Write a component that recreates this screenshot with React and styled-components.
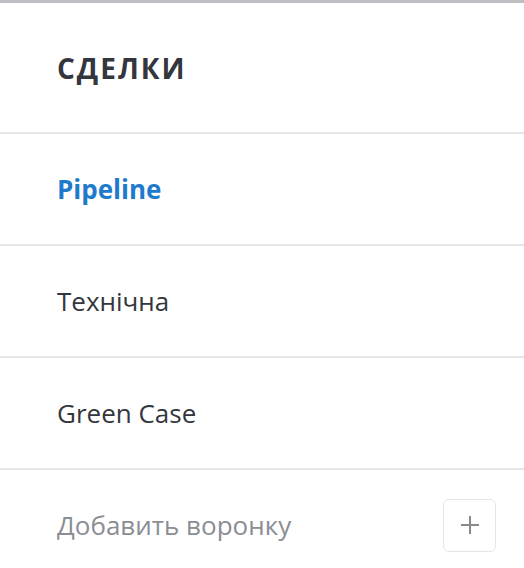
import React from 'react';
import styled, { createGlobalStyle } from 'styled-components';

const GlobalStyle = createGlobalStyle`
  html, body {
    margin: 0;
    padding: 0;
    background: #fff;
  }
  body {
    font-family: "Open Sans", "Noto Sans", sans-serif;
  }
`;

const Panel = styled.div`
  width: 524px;
  height: 568px;
  border-top: 3px solid #bdbdc2;
  box-sizing: border-box;
  display: flex;
  flex-direction: column;
  overflow: hidden;
`;

const Header = styled.div`
  height: 129px;
  flex-shrink: 0;
  display: flex;
  align-items: center;
  padding-left: 57px;
  border-bottom: 2px solid #e6e6e6;
  box-sizing: content-box;
`;

const Title = styled.h1`
  margin: 0;
  font-size: 28px;
  font-weight: 700;
  letter-spacing: 2px;
  color: #33363c;
  text-transform: uppercase;
`;

const Row = styled.div`
  height: 110px;
  display: flex;
  align-items: center;
  justify-content: space-between;
  padding: 0 28px 0 57px;
  border-bottom: ${({ $last }) => ($last ? 'none' : '2px solid #e6e6e6')};
  box-sizing: content-box;
  flex-shrink: 0;
`;

const Label = styled.span`
  font-size: 26px;
  font-weight: ${({ $active }) => ($active ? 700 : 400)};
  color: ${({ $active, $muted }) => ($active ? '#1e7bcc' : $muted ? '#8b8e92' : '#33363c')};
`;

const AddButton = styled.button`
  width: 53px;
  height: 53px;
  border: 1.5px solid #e1e5ec;
  border-radius: 6px;
  background: #fff;
  display: flex;
  align-items: center;
  justify-content: center;
  padding: 0;
  cursor: pointer;
`;

const funnels = [
  { name: 'Pipeline', active: true },
  { name: 'Технічна' },
  { name: 'Green Case' },
];

export default function App() {
  return (
    <>
      <GlobalStyle />
      <Panel>
        <Header>
          <Title>Сделки</Title>
        </Header>
        {funnels.map((f) => (
          <Row key={f.name}>
            <Label $active={f.active}>{f.name}</Label>
          </Row>
        ))}
        <Row $last>
          <Label $muted>Добавить воронку</Label>
          <AddButton aria-label="Добавить воронку">
            <svg width="20" height="20" viewBox="0 0 20 20">
              <path d="M10 1v18M1 10h18" stroke="#8a8a8a" strokeWidth="2" fill="none" />
            </svg>
          </AddButton>
        </Row>
      </Panel>
    </>
  );
}
